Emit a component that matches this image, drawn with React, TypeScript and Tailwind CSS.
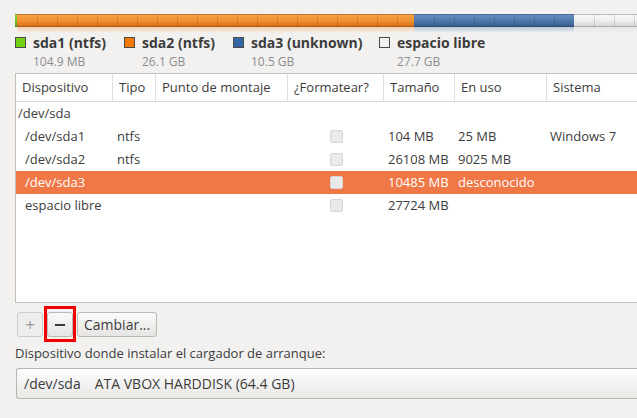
import React from 'react';

const font = { fontFamily: '"Open Sans", "DejaVu Sans", sans-serif' };

function PartitionBar() {
  // segments: [start, end, gradient id]
  const segs: [number, number, string][] = [
    [0, 2, 'g'],
    [2, 399, 'o'],
    [399, 559, 'b'],
    [559, 622, 'w'],
  ];
  const lines: number[] = [];
  segs.forEach(([s, e]) => {
    for (let x = s + 20; x < e; x += 20) if (s > 0) lines.push(x);
  });
  return (
    <svg width="622" height="20" className="block">
      <defs>
        <linearGradient id="o" x1="0" y1="0" x2="0" y2="1">
          <stop offset="0" stopColor="#f8a34e" />
          <stop offset="0.5" stopColor="#f3902f" />
          <stop offset="1" stopColor="#d3701b" />
        </linearGradient>
        <linearGradient id="b" x1="0" y1="0" x2="0" y2="1">
          <stop offset="0" stopColor="#6a90c2" />
          <stop offset="0.5" stopColor="#5179ad" />
          <stop offset="1" stopColor="#355a8c" />
        </linearGradient>
        <linearGradient id="w" x1="0" y1="0" x2="0" y2="1">
          <stop offset="0" stopColor="#fafafa" />
          <stop offset="0.5" stopColor="#eeeeee" />
          <stop offset="1" stopColor="#d5d5d5" />
        </linearGradient>
        <linearGradient id="g" x1="0" y1="0" x2="0" y2="1">
          <stop offset="0" stopColor="#8ad83a" />
          <stop offset="1" stopColor="#5aa61a" />
        </linearGradient>
        <linearGradient id="ro" x1="0" y1="0" x2="0" y2="1">
          <stop offset="0" stopColor="#f3902f" stopOpacity="0.35" />
          <stop offset="1" stopColor="#f3902f" stopOpacity="0" />
        </linearGradient>
        <linearGradient id="rb" x1="0" y1="0" x2="0" y2="1">
          <stop offset="0" stopColor="#5179ad" stopOpacity="0.35" />
          <stop offset="1" stopColor="#5179ad" stopOpacity="0" />
        </linearGradient>
        <linearGradient id="rw" x1="0" y1="0" x2="0" y2="1">
          <stop offset="0" stopColor="#cccccc" stopOpacity="0.3" />
          <stop offset="1" stopColor="#cccccc" stopOpacity="0" />
        </linearGradient>
      </defs>
      {segs.map(([s, e, id]) => (
        <rect key={id} x={s} y="0" width={e - s} height="13" fill={`url(#${id})`} />
      ))}
      <rect x="0" y="0" width="622" height="1" fill="#000" opacity="0.25" />
      <rect x="0" y="12" width="622" height="1" fill="#000" opacity="0.2" />
      {lines.map((x) => (
        <rect key={x} x={x} y="1" width="1" height="11" fill="#000" opacity="0.12" />
      ))}
      <rect x="2" y="13" width="397" height="6" fill="url(#ro)" />
      <rect x="399" y="13" width="160" height="6" fill="url(#rb)" />
      <rect x="559" y="13" width="63" height="6" fill="url(#rw)" />
    </svg>
  );
}

function Legend({ color, name, size }: { color: string; name: string; size: string }) {
  return (
    <div className="flex items-start gap-[7px]">
      <div className="w-[11px] h-[11px] mt-[4px] border border-[#4a4a4a]" style={{ background: color }} />
      <div className="flex flex-col">
        <span className="text-[14px] leading-[20px] font-bold text-[#3c3c3c]">{name}</span>
        <span className="text-[12px] leading-[17px] text-[#8c8c8c]">{size}</span>
      </div>
    </div>
  );
}

const cols = ['w-[97px]', 'w-[43px]', 'w-[132px]', 'w-[96px]', 'w-[71px]', 'w-[92px]', 'flex-1'];
const headers = ['Dispositivo', 'Tipo', 'Punto de montaje', '¿Formatear?', 'Tamaño', 'En uso', 'Sistema'];

type Row = { dev: string; indent: boolean; tipo?: string; check: boolean; size?: string; used?: string; sys?: string; sel?: boolean };

const rows: Row[] = [
  { dev: '/dev/sda', indent: false, check: false },
  { dev: '/dev/sda1', indent: true, tipo: 'ntfs', check: true, size: '104 MB', used: '25 MB', sys: 'Windows 7' },
  { dev: '/dev/sda2', indent: true, tipo: 'ntfs', check: true, size: '26108 MB', used: '9025 MB' },
  { dev: '/dev/sda3', indent: true, check: true, size: '10485 MB', used: 'desconocido', sel: true },
  { dev: 'espacio libre', indent: true, check: true, size: '27724 MB' },
];

function Checkbox() {
  return <div className="w-[13px] h-[13px] rounded-[2px] bg-[#e9e9e9] border border-[#d6d6d6]" />;
}

export default function App() {
  return (
    <div className="w-[637px] h-[418px] overflow-hidden bg-[#f2f1f0] text-[#3c3c3c]" style={font}>
      <div className="pl-[15px] pt-[14px]">
        <PartitionBar />
      </div>
      <div className="flex pl-[15px] mt-[-1px]">
        <div className="w-[109px]"><Legend color="#73d216" name="sda1 (ntfs)" size="104.9 MB" /></div>
        <div className="w-[109px]"><Legend color="#f57900" name="sda2 (ntfs)" size="26.1 GB" /></div>
        <div className="w-[146px]"><Legend color="#3465a4" name="sda3 (unknown)" size="10.5 GB" /></div>
        <Legend color="#f2f1f0" name="espacio libre" size="27.7 GB" />
      </div>

      <div className="ml-[15px] mt-[3px] h-[230px] bg-white border border-[#c3bfba] border-r-0 text-[13px]">
        <div className="flex h-[28px] border-b border-[#dcdad7]">
          {headers.map((h, i) => (
            <div
              key={h}
              className={`${cols[i]} flex items-center pl-[6px] whitespace-nowrap ${i < 6 ? 'border-r border-[#e1dfdc]' : ''}`}
            >
              {h}
            </div>
          ))}
        </div>
        {rows.map((r) => (
          <div key={r.dev} className={`flex h-[23px] items-center whitespace-nowrap ${r.sel ? 'bg-[#f07746] text-white' : ''}`}>
            <div className={`${cols[0]} ${r.indent ? 'pl-[9px]' : 'pl-[2px]'}`}>{r.dev}</div>
            <div className={`${cols[1]} pl-[4px]`}>{r.tipo}</div>
            <div className={cols[2]} />
            <div className={`${cols[3]} flex justify-center pl-[1px]`}>{r.check && <Checkbox />}</div>
            <div className={`${cols[4]} pl-[4px]`}>{r.size}</div>
            <div className={`${cols[5]} pl-[3px]`}>{r.used}</div>
            <div className={`${cols[6]} pl-[3px]`}>{r.sys}</div>
          </div>
        ))}
      </div>

      <div className="flex items-center pl-[17px] mt-[9px] gap-[4px] text-[13px]">
        <button className="w-[26px] h-[25px] rounded-[3px] border border-[#cfcdca] bg-[#efeeec] text-[#9a9a9a] text-[17px] leading-none flex items-center justify-center">
          +
        </button>
        <div className="relative">
          <button className="w-[26px] h-[25px] rounded-[3px] border border-[#bdbab6] bg-gradient-to-b from-[#fafafa] to-[#e6e5e3] flex items-center justify-center">
            <span className="block w-[10px] h-[2px] bg-[#3c3c3c]" />
          </button>
          <div className="absolute left-[-3px] top-[-6px] w-[32px] h-[36px] border-[3px] border-[#ee0000]" />
        </div>
        <button className="h-[25px] px-[6px] rounded-[3px] border border-[#bdbab6] bg-gradient-to-b from-[#fafafa] to-[#e6e5e3] text-[#3c3c3c] text-[14px]">
          Cambiar...
        </button>
      </div>

      <div className="pl-[15px] mt-[7px] text-[13px] leading-[18px]">Dispositivo donde instalar el cargador de arranque:</div>

      <div className="ml-[16px] mt-[6px] h-[31px] rounded-l-[3px] border border-r-0 border-[#b9b6b2] bg-gradient-to-b from-[#fdfdfd] to-[#e9e8e6] flex items-center pl-[7px] text-[14px] whitespace-nowrap">
        <span>/dev/sda</span>
        <span className="ml-[14px]">ATA VBOX HARDDISK (64.4 GB)</span>
      </div>
    </div>
  );
}
